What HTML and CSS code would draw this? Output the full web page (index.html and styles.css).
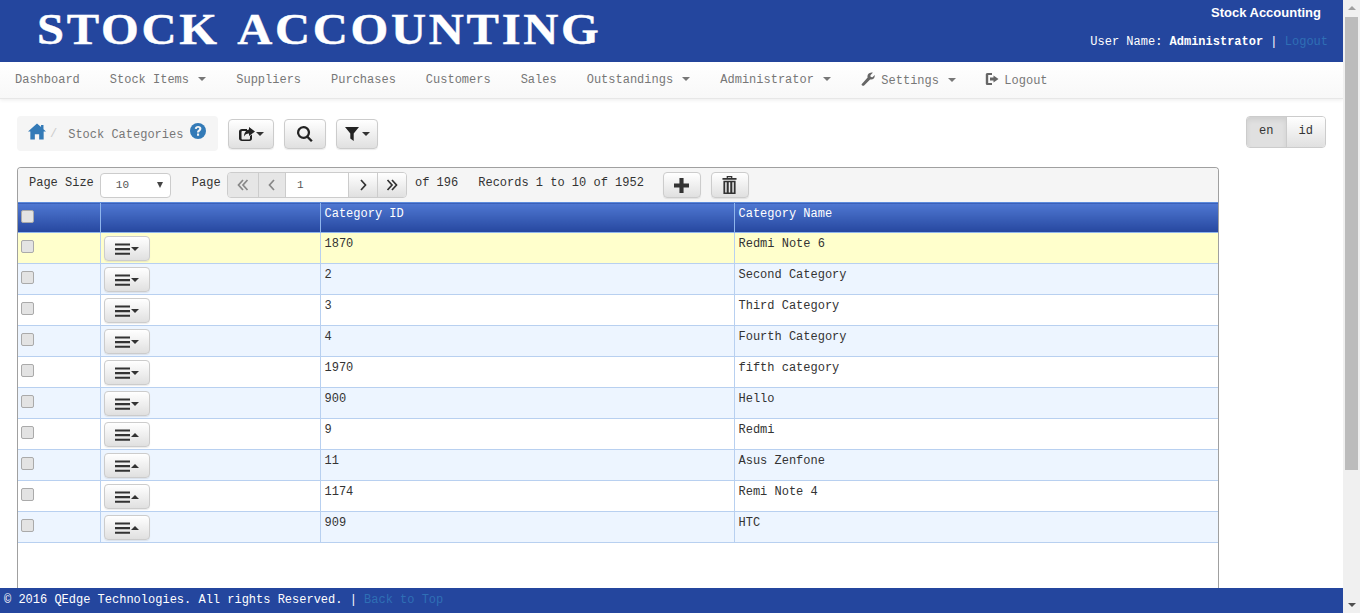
FILE: index.html
```html
<!DOCTYPE html>
<html lang="en">
<head>
  <meta charset="UTF-8" />
  <title>Stock Categories</title>
  <link rel="stylesheet" href="styles.css">
</head>
<body>
  <svg class="sprites" width="0" height="0">
    <symbol id="i-menu" viewBox="0 0 16 14"><path d="M0 1h16v2.2H0zM0 6h16v2.2H0zM0 11h16v2.2H0z"/></symbol>
  </svg>

  <div class="page">
    <header class="topbar">
      <div class="brand">STOCK ACCOUNTING</div>
      <div class="topbar-right">
        <div class="app-name">Stock Accounting</div>
        <div class="user-line">User Name: <b>Administrator</b> | <a href="#">Logout</a></div>
      </div>
    </header>

    <nav class="navbar">
      <a href="#">Dashboard</a>
      <a href="#">Stock Items <i class="caret"></i></a>
      <a href="#">Suppliers</a>
      <a href="#">Purchases</a>
      <a href="#">Customers</a>
      <a href="#">Sales</a>
      <a href="#">Outstandings <i class="caret"></i></a>
      <a href="#">Administrator <i class="caret"></i></a>
      <a href="#" class="low"><svg class="nav-icon" viewBox="0 0 14 14"><path d="M.6 12.2 6.6 5.6C6 3.4 7.2.8 10.6.6c.6 0 1 .1 1.2.2L9.4 3.2l.3 1.8 1.8.3 2.2-2.3c.4 2.800-1.600 5-4.600 4.400l-6 6.200c-.8.6-2.900-.4-2.500-1.400z"/></svg> Settings <i class="caret"></i></a>
      <a href="#" class="low logout"><svg class="nav-icon" viewBox="0 0 14 14"><path d="M2.5 1H7v2H3.200v8H7v2H2.500C1.200 13 .8 12.200.8 11.400V2.600C.8 1.800 1.200 1 2.500 1zM8.500 3.500 13.500 7l-5 3.500V8.500H5v-3h3.500z"/></svg> Logout</a>
    </nav>

    <main class="content">
      <div class="toolbar-row">
        <div class="crumb">
          <svg class="home" viewBox="0 0 20 18"><path d="M10 0 14.500 4V1.800h2.700v4.600L20 9h-2.600v9h-5v-6H7.600v6h-5V9H0z"/></svg>
          <span class="sep">/</span>
          <span class="crumb-text">Stock Categories</span>
          <svg class="help" viewBox="0 0 16 16"><circle cx="8" cy="8" r="8"/><path fill="#f5f5f5" d="M4.800 5.800C5 3.900 6.300 3 8.100 3c1.900 0 3.300 1 3.300 2.700 0 2.200-2.300 2.200-2.300 3.900H7c0-2.700 2.200-2.700 2.200-3.800 0-.6-.5-1-1.100-1-.8 0-1.200.5-1.300 1.200zM7 10.500h2.100v2.300H7z"/></svg>
        </div>
        <button class="btn btn-tool wide">
          <svg class="tool-icon" viewBox="0 0 16 16"><path d="M3 3h5v2H3.500c-.5 0-1 .4-1 1v6.500c0 .5.400 1 1 1H10c.600 0 1-.5 1-1V10l2-1.500v4c0 1.400-1 2.500-2.500 2.500H3c-1.600 0-3-1-3-2.500V5.500C0 4 1.400 3 3 3zM10 1l6 4.500-6 4.500V7.500C7.500 7.500 6 8.500 5 10.500 5 7 7 4 10 3.500z"/></svg><i class="caret dark"></i>
        </button>
        <button class="btn btn-tool">
          <svg class="tool-icon" viewBox="0 0 16 16"><path fill-rule="evenodd" d="M6.500 0a6.500 6.500 0 0 1 5.200 10.400l4 4-1.700 1.600-4-4A6.500 6.500 0 1 1 6.500 0zm0 2.200a4.300 4.300 0 1 0 0 8.600 4.300 4.300 0 0 0 0-8.600z"/></svg>
        </button>
        <button class="btn btn-tool">
          <svg class="tool-icon" viewBox="0 0 16 16"><path d="M0 1h14L8.700 7.500V15L5.300 12.500V7.500z"/></svg><i class="caret dark"></i>
        </button>
        <div class="lang">
          <button class="lang-on">en</button><button class="lang-off">id</button>
        </div>
      </div>

      <section class="panel">
        <div class="pager">
          <span class="pager-label">Page Size</span>
          <div class="size-select">10<i class="arrow-down"></i></div>
          <span class="pager-label page-word">Page</span>
          <div class="page-group">
            <span class="pg off"><svg class="chev" viewBox="0 0 12 12"><path d="M6 1 1.500 6 6 11M10.500 1 6 6l4.500 5"/></svg></span>
            <span class="pg off"><svg class="chev" viewBox="0 0 12 12"><path d="M8 1 3.500 6 8 11"/></svg></span>
            <span class="pg-input">1</span>
            <span class="pg"><svg class="chev" viewBox="0 0 12 12"><path d="M4 1l4.500 5L4 11"/></svg></span>
            <span class="pg"><svg class="chev" viewBox="0 0 12 12"><path d="M1.500 1 6 6l-4.500 5M6 1l4.500 5L6 11"/></svg></span>
          </div>
          <span class="pager-label of">of 196</span>
          <span class="pager-label records">Records 1 to 10 of 1952</span>
          <button class="btn btn-action add"><svg class="act-icon" viewBox="0 0 16 16"><path d="M5.800 0h4.400v5.800H16v4.400h-5.800V16H5.800v-5.800H0V5.800h5.800z"/></svg></button>
          <button class="btn btn-action"><svg class="trash-icon" viewBox="0 0 16 19"><path fill-rule="evenodd" d="M5 0h6v2h4.500v2H.5V2H5zM6.300 1.200V2h3.400v-.8zM1.500 5h13v14h-13zM3.400 6.500V17.500h1.600V6.500zM7.200 6.500V17.500h1.600V6.500zM11 6.500V17.500h1.600V6.500z"/></svg></button>
        </div>

        <table class="grid">
          <colgroup>
            <col class="col-check"><col class="col-menu"><col class="col-id"><col>
          </colgroup>
          <thead>
            <tr><th><input type="checkbox"></th><th></th><th>Category ID</th><th>Category Name</th></tr>
          </thead>
          <tbody>
            <tr class="selected"><td><input type="checkbox"></td><td><button class="btn btn-row"><svg class="row-icon"><use href="#i-menu"/></svg><i class="caret dark"></i></button></td><td>1870</td><td>Redmi Note 6</td></tr>
            <tr class="alt"><td><input type="checkbox"></td><td><button class="btn btn-row"><svg class="row-icon"><use href="#i-menu"/></svg><i class="caret dark"></i></button></td><td>2</td><td>Second Category</td></tr>
            <tr><td><input type="checkbox"></td><td><button class="btn btn-row"><svg class="row-icon"><use href="#i-menu"/></svg><i class="caret dark"></i></button></td><td>3</td><td>Third Category</td></tr>
            <tr class="alt"><td><input type="checkbox"></td><td><button class="btn btn-row"><svg class="row-icon"><use href="#i-menu"/></svg><i class="caret dark"></i></button></td><td>4</td><td>Fourth Category</td></tr>
            <tr><td><input type="checkbox"></td><td><button class="btn btn-row"><svg class="row-icon"><use href="#i-menu"/></svg><i class="caret dark"></i></button></td><td>1970</td><td>fifth category</td></tr>
            <tr class="alt"><td><input type="checkbox"></td><td><button class="btn btn-row"><svg class="row-icon"><use href="#i-menu"/></svg><i class="caret dark"></i></button></td><td>900</td><td>Hello</td></tr>
            <tr><td><input type="checkbox"></td><td><button class="btn btn-row"><svg class="row-icon"><use href="#i-menu"/></svg><i class="caret dark up"></i></button></td><td>9</td><td>Redmi</td></tr>
            <tr class="alt"><td><input type="checkbox"></td><td><button class="btn btn-row"><svg class="row-icon"><use href="#i-menu"/></svg><i class="caret dark up"></i></button></td><td>11</td><td>Asus Zenfone</td></tr>
            <tr><td><input type="checkbox"></td><td><button class="btn btn-row"><svg class="row-icon"><use href="#i-menu"/></svg><i class="caret dark up"></i></button></td><td>1174</td><td>Remi Note 4</td></tr>
            <tr class="alt"><td><input type="checkbox"></td><td><button class="btn btn-row"><svg class="row-icon"><use href="#i-menu"/></svg><i class="caret dark up"></i></button></td><td>909</td><td>HTC</td></tr>
          </tbody>
        </table>
      </section>
    </main>

    <footer class="footer">&copy; 2016 QEdge Technologies. All rights Reserved. | <a href="#">Back to Top</a></footer>
  </div>

  <div class="scrollbar">
    <i class="sb-up"></i>
    <div class="sb-thumb"></div>
    <i class="sb-down"></i>
  </div>
</body>
</html>
```

FILE: styles.css
```css
* {
  box-sizing: border-box;
}

html, body {
  height: 100%;
}

body {
  margin: 0;
  display: flex;
  overflow: hidden;
  background: #fff;
  color: #333;
  font-family: "Liberation Mono", "Courier New", monospace;
  font-size: 12px;
}

a {
  text-decoration: none;
}

.sprites {
  position: absolute;
}

.page {
  flex: 1;
  min-width: 0;
  height: 613px;
  overflow: hidden;
  position: relative;
}

/* top bar */
.topbar {
  height: 62px;
  background: #24469e;
  color: #fff;
  display: flex;
  justify-content: space-between;
}

.brand {
  margin: 5px 0 0 37px;
  font-family: "Liberation Serif", "Times New Roman", serif;
  font-size: 44px;
  line-height: 50px;
  font-weight: bold;
  letter-spacing: 2.45px;
  word-spacing: 4.8px;
  white-space: nowrap;
  transform: scaleX(1.104);
  transform-origin: left center;
  -webkit-text-stroke: 0.4px #fff;
}

.topbar-right {
  padding: 5px 15px 0 0;
  text-align: right;
}

.app-name {
  padding-right: 7px;
  font-family: "Liberation Sans", Arial, sans-serif;
  font-size: 13px;
  line-height: 15px;
  font-weight: bold;
}

.user-line {
  margin-top: 14px;
  line-height: 16px;
}

.user-line a {
  color: #2f6fb5;
}

/* nav */
.navbar {
  height: 37px;
  padding: 0 0 1px 15px;
  display: flex;
  align-items: center;
  gap: 30px;
  background: linear-gradient(to bottom, #fff, #f8f8f8);
  border-bottom: 1px solid #e7e7e7;
  box-shadow: 0 1px 4px rgba(0, 0, 0, 0.08);
}

.navbar a {
  color: #777;
  white-space: nowrap;
}

.caret {
  display: inline-block;
  width: 0;
  height: 0;
  margin-left: 2px;
  vertical-align: middle;
  border-top: 4px solid #777;
  border-left: 4px solid transparent;
  border-right: 4px solid transparent;
}

.caret.dark {
  margin-left: 0;
  border-top-color: #333;
}

.caret.up {
  border-top: 0;
  border-bottom: 4px solid #333;
}

.nav-icon {
  width: 14px;
  height: 14px;
  margin-right: -1px;
  vertical-align: -2px;
  fill: #666;
}

.logout .nav-icon {
  margin: 0 -2px 0 -1px;
}

/* content */
.content {
  padding: 17px 17px 0;
}

.toolbar-row {
  display: flex;
  align-items: flex-start;
  height: 51px;
}

.crumb {
  width: 201px;
  height: 35px;
  padding-left: 11px;
  display: flex;
  align-items: center;
  background: #f5f5f5;
  border-radius: 4px;
}

.home {
  width: 18px;
  height: 17px;
  margin-top: -5px;
  fill: #337ab7;
}

.sep {
  margin-left: 4px;
  color: #ccc;
}

.crumb-text {
  margin: 2px 0 0 11px;
  color: #777;
}

.help {
  width: 16px;
  height: 16px;
  margin: -5px 0 0 7px;
  fill: #337ab7;
}

.btn {
  padding: 0;
  display: inline-flex;
  align-items: center;
  justify-content: center;
  background: linear-gradient(to bottom, #fff, #e0e0e0);
  border: 1px solid #ccc;
  border-radius: 4px;
  box-shadow: 0 1px 1px rgba(0, 0, 0, 0.08);
  font: inherit;
  color: #333;
}

.btn-tool {
  width: 42px;
  height: 30px;
  margin: 3px 0 0 10px;
  gap: 1px;
}

.btn-tool.wide {
  width: 46px;
}

.tool-icon {
  width: 16px;
  height: 16px;
  fill: #222;
}

.lang {
  margin-left: auto;
  width: 80px;
  height: 32px;
  display: flex;
  border: 1px solid #ccc;
  border-radius: 4px;
  overflow: hidden;
}

.lang button {
  flex: 1;
  padding: 0 0 2px;
  border: 0;
  font: inherit;
  color: #333;
}

.lang-on {
  background: #e0e0e0;
  box-shadow: inset 0 3px 5px rgba(0, 0, 0, 0.08);
}

.lang-off {
  background: linear-gradient(to bottom, #fff, #e0e0e0);
  border-left: 1px solid #ccc !important;
}

/* grid panel */
.panel {
  width: 1202px;
  height: 440px;
  border: 1px solid #a0a0a0;
  border-bottom: 0;
  border-radius: 4px 4px 0 0;
  overflow: hidden;
}

.pager {
  height: 34px;
  padding-left: 11px;
  display: flex;
  align-items: center;
  background: #f5f5f5;
  color: #333;
}

.pager-label {
  margin-top: -5px;
  white-space: nowrap;
}

.size-select {
  width: 71px;
  height: 25px;
  margin-left: 6px;
  padding: 0 7px 0 15px;
  display: flex;
  align-items: center;
  justify-content: space-between;
  background: #fff;
  border: 1px solid #ccc;
  border-radius: 4px;
  font-size: 11px;
  color: #555;
}

.arrow-down {
  width: 0;
  height: 0;
  border-top: 6px solid #444;
  border-left: 3px solid transparent;
  border-right: 3px solid transparent;
}

.page-word {
  margin-left: 21px;
}

.page-group {
  width: 180px;
  height: 26px;
  margin-left: 6.4px;
  display: flex;
  border: 1px solid #ccc;
  border-radius: 4px;
  overflow: hidden;
}

.pg {
  width: 29px;
  display: flex;
  align-items: center;
  justify-content: center;
  background: linear-gradient(to bottom, #fff, #e0e0e0);
  border-left: 1px solid #ccc;
  stroke: #333;
}

.pg.off {
  width: 27px;
  background: #e6e6e6;
  stroke: #888;
}

.pg.off:first-child {
  width: 30px;
  border-left: 0;
}

.pg-input {
  flex: 1;
  padding-left: 11px;
  line-height: 24px;
  background: #fff;
  border-left: 1px solid #ccc;
  font-size: 11px;
  color: #555;
}

.chev {
  width: 12px;
  height: 12px;
  fill: none;
  stroke-width: 1.7;
}

.of {
  margin-left: 8px;
}

.records {
  margin-left: 20px;
}

.btn-action {
  width: 38px;
  height: 26px;
  margin-left: 10px;
}

.btn-action.add {
  margin-left: 19px;
}

.act-icon {
  width: 15px;
  height: 15px;
  fill: #333;
}

.trash-icon {
  width: 15px;
  height: 18px;
  fill: #333;
}

.grid {
  width: 100%;
  table-layout: fixed;
  border-collapse: collapse;
  color: #333;
}

.col-check {
  width: 82px;
}

.col-menu {
  width: 220px;
}

.col-id {
  width: 414px;
}

.grid th {
  height: 30px;
  padding: 0 3px 8px;
  text-align: left;
  font-weight: normal;
  color: #fff;
  background: linear-gradient(to bottom, #4f78d2, #26479f);
  border-top: 1px solid #5b8bdc;
  border-left: 1px solid #8fb5ec;
  border-bottom: 1px solid #8fb5ec;
}

.grid td {
  height: 31px;
  padding: 4px 3px 0;
  vertical-align: top;
  border-left: 1px solid #b8d0f0;
  border-bottom: 1px solid #b8d0f0;
}

.grid th:nth-child(n+3),
.grid td:nth-child(n+3) {
  padding-left: 4px;
}

.grid th:first-child,
.grid td:first-child {
  border-left: 0;
}

.grid input {
  width: 13px;
  height: 13px;
  margin: 3px 0 0;
  display: block;
  appearance: none;
  background: #e3e3e3;
  border: 1px solid #aaa;
  border-radius: 2px;
}

.grid th input {
  margin-top: 6px;
}

.grid .selected td {
  background: #ffffcc;
}

.grid .alt td {
  background: #edf5ff;
}

.btn-row {
  width: 46px;
  height: 25px;
  margin-top: -1px;
  gap: 1px;
}

.row-icon {
  width: 15px;
  height: 14px;
  fill: #333;
}

/* footer */
.footer {
  position: absolute;
  left: 0;
  right: 0;
  bottom: 0;
  height: 25px;
  padding: 5px 0 0 4px;
  background: #24469e;
  color: #fff;
}

.footer a {
  color: #2f6fb5;
}

/* browser scrollbar */
.scrollbar {
  width: 17px;
  height: 613px;
  flex: none;
  display: flex;
  flex-direction: column;
  align-items: center;
  background: #f0f0f0;
}

.sb-up, .sb-down {
  width: 0;
  height: 0;
  margin: 6px 0;
  border-left: 4px solid transparent;
  border-right: 4px solid transparent;
}

.sb-up {
  border-bottom: 4px solid #a0a0a0;
}

.sb-down {
  border-top: 4px solid #505050;
}

.sb-thumb {
  width: 13px;
  flex: 1;
  background: #bcbcbc;
  margin-top: 1px;
  margin-bottom: 127px;
}
```
